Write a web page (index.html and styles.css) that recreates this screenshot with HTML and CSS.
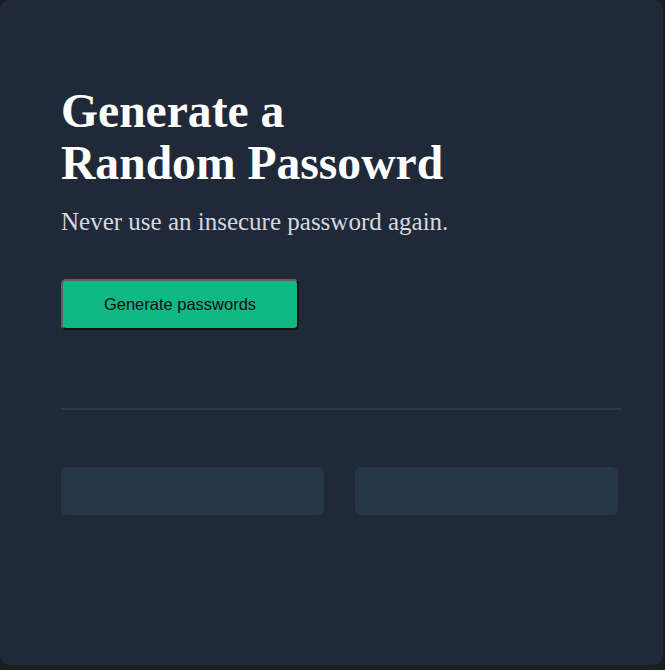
FILE: index.html
```html
<!DOCTYPE html>
<html>
<head>
<meta charset="utf-8">
<link rel="stylesheet" href="styles.css">
</head>
<body>
<main class="card">
  <h1 class="title">Generate a<br>Random Passowrd</h1>
  <p class="subtitle">Never use an insecure password again.</p>
  <button class="generate-btn">Generate passwords</button>
  <hr class="divider">
  <div class="outputs">
    <div class="output"></div>
    <div class="output"></div>
  </div>
</main>
</body>
</html>
```
FILE: styles.css
```css
html, body {
  margin: 0;
  padding: 0;
  background: #1c1d1f;
}
.card {
  box-sizing: border-box;
  width: 663px;
  height: 665px;
  background: #1f2937;
  border-radius: 10px;
  padding: 85px 42px 0 61px;
  display: flex;
  flex-direction: column;
  align-items: flex-start;
}
.title {
  margin: 0;
  font-family: "Liberation Serif", serif;
  font-weight: 700;
  font-size: 47.6px;
  line-height: 52px;
  color: #ffffff;
}
.subtitle {
  margin: 18px 0 0;
  font-family: "Liberation Serif", serif;
  font-size: 25px;
  line-height: 29px;
  color: #d5d9e0;
}
.generate-btn {
  margin-top: 43px;
  box-sizing: border-box;
  width: 238px;
  height: 51px;
  background: #10b981;
  border-style: solid;
  border-width: 2px;
  border-color: #5f6064 #111214 #111214 #5f6064;
  border-radius: 5px;
  font-family: "Liberation Sans", Arial, sans-serif;
  font-size: 16.5px;
  color: #0b0f14;
  padding: 0;
}
.divider {
  align-self: stretch;
  margin: 78px 0 0;
  border: 0;
  height: 2px;
  background: #2f3b4e;
}
.outputs {
  margin-top: 57px;
  display: flex;
  gap: 31px;
}
.output {
  width: 263px;
  height: 48px;
  border-radius: 6px;
  background: #273549;
}
```
